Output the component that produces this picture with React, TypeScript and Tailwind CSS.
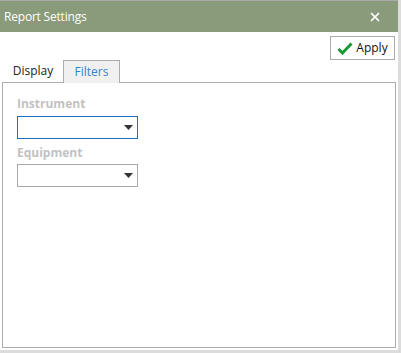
import { X } from "lucide-react";

function Dropdown({ focused }: { focused?: boolean }) {
  const border = focused ? "border-[#1a6fc4]" : "border-[#a8a8a8]";
  return (
    <div
      className={"flex h-[23px] w-[121px] items-center justify-end border-solid border bg-white pr-[4px] " + border}
    >
      <svg width="9" height="5" viewBox="0 0 9 5">
        <path d="M0 0h9L4.5 5z" fill="#333" />
      </svg>
    </div>
  );
}

export default function App() {
  return (
    <div
      className="h-[353px] w-[401px] bg-[#dcdcdc]"
      style={{ fontFamily: '"Open Sans", "Noto Sans", sans-serif' }}
    >
      <div className="flex h-[350px] w-[398px] flex-col border-t border-[#a9a9a9] bg-white">
        <div className="flex h-[31px] shrink-0 items-center justify-between bg-[#899b7a] pl-[4px] pr-[16px]">
          <span className="text-[12px] tracking-[-0.2px] text-white">Report Settings</span>
          <X size={14} strokeWidth={3} className="text-white" />
        </div>

        <div className="flex justify-end pr-[3px] pt-[4px]">
          <button className="flex h-[24px] w-[65px] items-center justify-center gap-[3px] border border-[#acacac] bg-white text-[12px] text-[#111]">
            <svg width="16" height="13" viewBox="0 0 16 13">
              <path d="M1.5 7l4 4L14.5 1.5" stroke="#1a9a36" strokeWidth="3" fill="none" />
            </svg>
            Apply
          </button>
        </div>

        <div className="flex h-[22px] items-end pl-[3px]">
          <div className="flex h-[22px] w-[60px] items-center justify-center text-[12px] text-[#222]">
            Display
          </div>
          <div className="relative -mb-px flex h-[23px] w-[57px] items-center justify-center border border-b-0 border-[#acacac] bg-[#f0f0f0] text-[12px] text-[#3c7fce]">
            Filters
          </div>
        </div>

        <div className="mx-[2px] mb-[2px] flex flex-1 flex-col border border-[#acacac] pl-[14px] pt-[13px]">
          <div className="text-[12px] font-bold leading-[16px] text-[#c2c2c2]">Instrument</div>
          <div className="mt-[4px]">
            <Dropdown focused />
          </div>
          <div className="mt-[6px] text-[12px] font-bold leading-[16px] text-[#c2c2c2]">Equipment</div>
          <div className="mt-[3px]">
            <Dropdown />
          </div>
        </div>
      </div>
    </div>
  );
}
